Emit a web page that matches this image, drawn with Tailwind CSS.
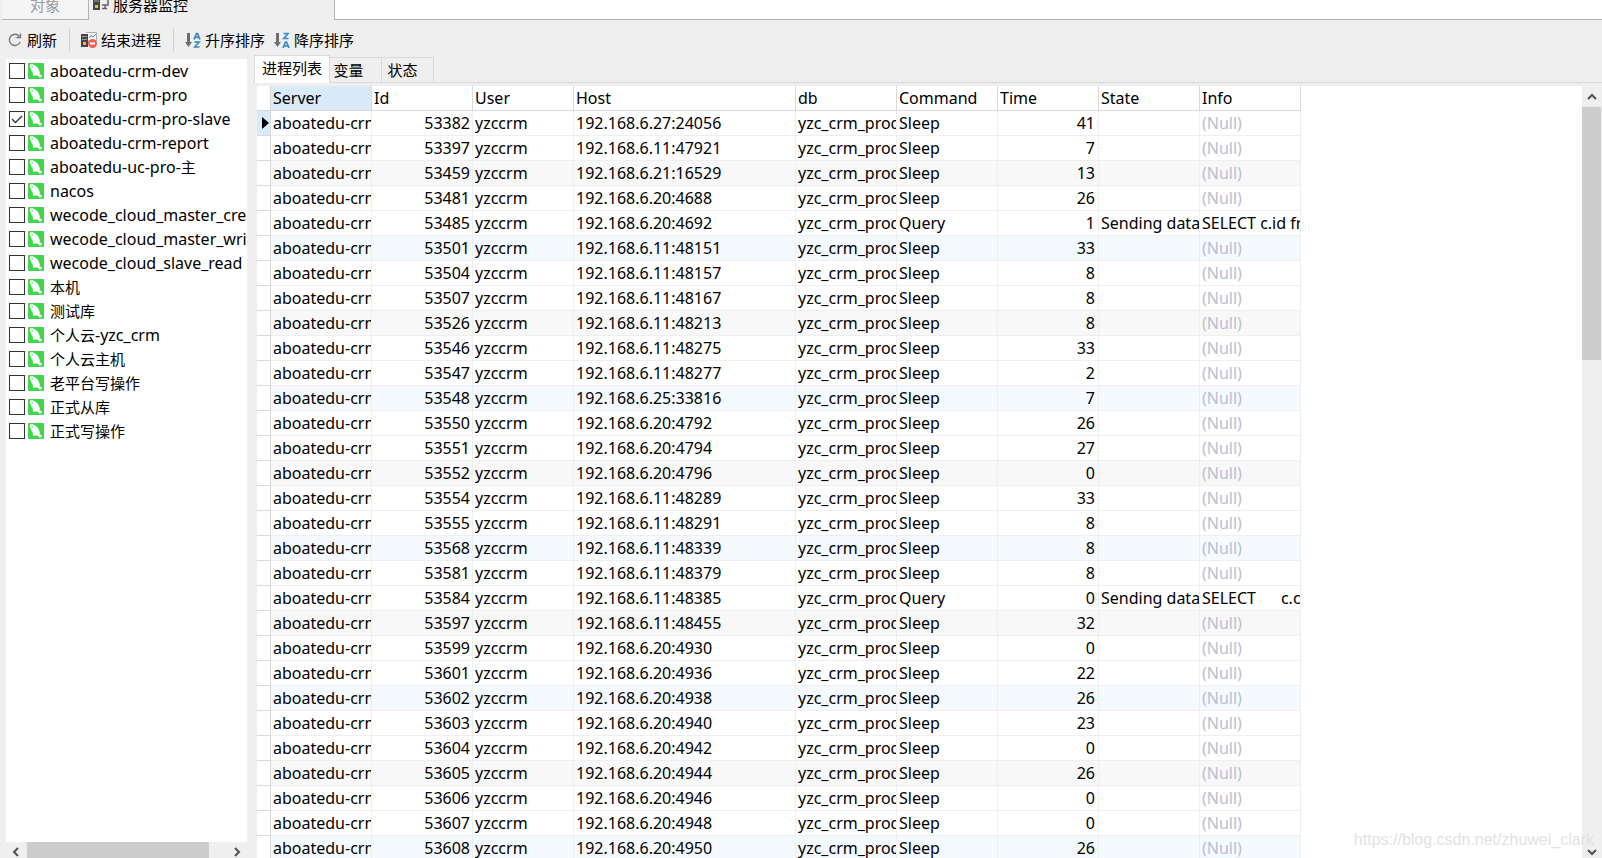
<!DOCTYPE html>
<html lang="zh-CN">
<head>
    <meta charset="utf-8">
    <meta name="viewport" content="width=device-width, initial-scale=1">
    <title>服务器监控</title>
    <script src="https://cdn.jsdelivr.net/npm/@tailwindcss/browser@4"></script>
</head>
<body class="flex h-screen flex-col overflow-hidden bg-[#efefef] font-['Noto_Sans','Noto_Sans_CJK_SC',sans-serif] text-[15px] leading-6 text-black">

<svg class="hidden">
    <symbol id="dolphin" viewBox="0 0 16 16">
        <rect width="16" height="16" rx="1" fill="#40d64b"/>
        <path fill="#fff" d="M1.500 2.500C2 1.300 3.400 1 4.800 1.400C6 1.600 7 2.200 8 3.200C10 4.600 11.200 6.500 11.500 8.800C11.700 10.500 12.400 12 14.600 13.400L12.800 13.700L12.500 15.200C11.400 14.600 10.600 13.800 9.800 12.800C8.600 12.900 7.600 12.600 6.700 12L6 13.400C5 12.600 4.700 11.300 5 10C4 9 3.500 8 3.300 6.800C3.200 5.800 2.600 5.200 2 4.500Z"/>
        <circle cx="4.200" cy="3.800" r=".7" fill="#40d64b"/>
    </symbol>
    <symbol id="chevron" viewBox="0 0 10 10">
        <path d="M1 7L5 3L9 7" fill="none" stroke="#505050" stroke-width="2"/>
    </symbol>
    <symbol id="down-arrow" viewBox="0 0 7 16">
        <path d="M2 1H5V10H7L3.500 15L0 10H2Z" fill="#6e6e6e"/>
    </symbol>
</svg>

<header class="flex h-5 shrink-0 items-end">
    <button class="ml-[2px] flex h-5 w-[87px] items-end justify-center border-r border-b border-[#b4b4b4] bg-[#f5f5f5] pb-[2px] text-[#9a9a9a]">对象</button>
    <button class="flex h-5 w-[245px] items-end pb-[3px] pl-1">
        <svg class="mr-1 mb-[6px] h-4 w-4 shrink-0" viewBox="0 0 16 16">
            <rect x="0" y="0" width="7" height="15" fill="#454545"/>
            <path d="M1 3H6M1 6H6" stroke="#999"/>
            <rect x="2" y="10" width="3" height="3" fill="#f5b92e"/>
            <path d="M8 3H15V10H9M12 10V13M9 13.500H14" fill="none" stroke="#666" stroke-width="1.500"/>
        </svg>
        服务器监控
    </button>
    <div class="h-5 flex-1 border-b border-l border-[#b4b4b4] bg-white"></div>
</header>

<nav class="flex h-[35px] shrink-0 items-center pt-1 pl-2">
    <button class="flex items-center gap-[5px] pr-3">
        <svg class="h-[14px] w-[14px]" viewBox="0 0 14 14" fill="none" stroke="#777" stroke-width="1.300">
            <path d="M12.200 9A5.600 5.600 0 1 1 11.500 3.500"/>
            <path d="M12.500 .5V4.500H8.500"/>
        </svg>
        刷新
    </button>
    <button class="flex items-center gap-1 border-l border-[#d0d0d0] pr-3 pl-[11px]">
        <svg class="h-4 w-4" viewBox="0 0 16 16">
            <path d="M5 .5H15.500V9H7" fill="#fff" stroke="#aaa"/>
            <path d="M8 6L10 3.500L12 5L15 2" fill="none" stroke="#3b8ac4"/>
            <rect x="0" y="2" width="7" height="13" fill="#454545"/>
            <path d="M1 4.500H6M1 7.500H6" stroke="#999"/>
            <rect x="2" y="10" width="3" height="3" fill="#f5b92e"/>
            <circle cx="11.500" cy="11.500" r="4.500" fill="#fb5a50"/>
            <path d="M9 11.500H14" stroke="#fff" stroke-width="2"/>
        </svg>
        结束进程
    </button>
    <button class="flex items-center gap-1 border-l border-[#d0d0d0] pr-[9px] pl-[11px]">
        <svg class="h-4 w-4" viewBox="0 0 16 16">
            <use href="#down-arrow" width="7" height="16"/>
            <path d="M9 7.500L11.500 1.500H12.500L15 7.500M10.300 5.300H13.700M9.500 10.200H14L9.800 15H14.500" fill="none" stroke="#3b8ac4" stroke-width="1.700"/>
        </svg>
        升序排序
    </button>
    <button class="flex items-center gap-1">
        <svg class="h-4 w-4" viewBox="0 0 16 16">
            <use href="#down-arrow" width="7" height="16"/>
            <path d="M9.500 1.500H14L9.800 6.500H14.500M9 16L11.500 10H12.500L15 16M10.300 13.800H13.700" fill="none" stroke="#3b8ac4" stroke-width="1.700"/>
        </svg>
        降序排序
    </button>
</nav>

<main class="flex min-h-0 flex-1">
    <aside class="mt-1 ml-[6px] flex w-[241px] shrink-0 flex-col">
        <ul id="servers" class="flex-1 overflow-hidden bg-white text-base leading-6"></ul>
        <div class="flex h-4 items-center justify-between px-[5px]">
            <button class="pt-[3px]" aria-label="向左"><svg class="h-[10px] w-[10px] -rotate-90"><use href="#chevron"/></svg></button>
            <div class="mr-[18px] h-4 w-[182px] bg-[#cdcdcd]"></div>
            <button class="pt-[3px]" aria-label="向右"><svg class="h-[10px] w-[10px] rotate-90"><use href="#chevron"/></svg></button>
        </div>
    </aside>

    <section class="ml-[7px] flex min-w-0 flex-1 flex-col">
        <div class="flex h-7 shrink-0 items-end">
            <button class="h-7 w-[76px] border-x border-t border-[#d9d9d9] bg-white pb-[3px]">进程列表</button>
            <button class="h-[26px] w-[52px] border-t border-r border-b border-[#d9d9d9] pr-[14px]">变量</button>
            <button class="h-[26px] w-[52px] border-t border-r border-b border-[#d9d9d9] pr-[10px]">状态</button>
            <div class="h-px flex-1 bg-[#d9d9d9]"></div>
        </div>
        <div class="mt-[3px] ml-[3px] flex min-h-0 flex-1">
            <div class="flex-1 overflow-hidden bg-white">
                <table class="w-[1044px] table-fixed border-separate border-spacing-0 text-base leading-6">
                    <colgroup>
                        <col class="w-[14px]"><col class="w-[101px]"><col class="w-[101px]"><col class="w-[101px]"><col class="w-[222px]">
                        <col class="w-[101px]"><col class="w-[101px]"><col class="w-[101px]"><col class="w-[101px]"><col class="w-[101px]">
                    </colgroup>
                    <thead>
                        <tr id="columns" class="h-[25px] text-left"></tr>
                    </thead>
                    <tbody id="processes"></tbody>
                </table>
            </div>
            <div class="flex w-5 flex-col items-center pb-[1px]">
                <button class="flex h-[21px] items-center" aria-label="向上"><svg class="h-[10px] w-[10px]"><use href="#chevron"/></svg></button>
                <div class="mr-px h-[253px] w-[19px] bg-[#cdcdcd]"></div>
                <button class="mt-auto" aria-label="向下"><svg class="h-[10px] w-[10px] rotate-180"><use href="#chevron"/></svg></button>
            </div>
        </div>
    </section>
</main>

<p class="absolute right-2 bottom-[6px] font-['Liberation_Sans',sans-serif] text-base text-[#e2e2e2]">https://blog.csdn.net/zhuwei_clark</p>

<script>
const servers = [
    "aboatedu-crm-dev", "aboatedu-crm-pro", "aboatedu-crm-pro-slave", "aboatedu-crm-report",
    "aboatedu-uc-pro-主", "nacos", "wecode_cloud_master_crea", "wecode_cloud_master_writ",
    "wecode_cloud_slave_read", "本机", "测试库", "个人云-yzc_crm", "个人云主机",
    "老平台写操作", "正式从库", "正式写操作",
]
const columns = ["Server", "Id", "User", "Host", "db", "Command", "Time", "State", "Info"]

// id, host, time, info (only for running queries)
const processes = [
    [53382, "192.168.6.27:24056", 41],
    [53397, "192.168.6.11:47921", 7],
    [53459, "192.168.6.21:16529", 13],
    [53481, "192.168.6.20:4688", 26],
    [53485, "192.168.6.20:4692", 1, "SELECT c.id fro"],
    [53501, "192.168.6.11:48151", 33],
    [53504, "192.168.6.11:48157", 8],
    [53507, "192.168.6.11:48167", 8],
    [53526, "192.168.6.11:48213", 8],
    [53546, "192.168.6.11:48275", 33],
    [53547, "192.168.6.11:48277", 2],
    [53548, "192.168.6.25:33816", 7],
    [53550, "192.168.6.20:4792", 26],
    [53551, "192.168.6.20:4794", 27],
    [53552, "192.168.6.20:4796", 0],
    [53554, "192.168.6.11:48289", 33],
    [53555, "192.168.6.11:48291", 8],
    [53568, "192.168.6.11:48339", 8],
    [53581, "192.168.6.11:48379", 8],
    [53584, "192.168.6.11:48385", 0, "SELECT      c.cl"],
    [53597, "192.168.6.11:48455", 32],
    [53599, "192.168.6.20:4930", 0],
    [53601, "192.168.6.20:4936", 22],
    [53602, "192.168.6.20:4938", 26],
    [53603, "192.168.6.20:4940", 23],
    [53604, "192.168.6.20:4942", 0],
    [53605, "192.168.6.20:4944", 26],
    [53606, "192.168.6.20:4946", 0],
    [53607, "192.168.6.20:4948", 0],
    [53608, "192.168.6.20:4950", 26],
]

// Chinese runs are set one pixel smaller than the Latin text
const mixed = text => text.replace(/[\u4e00-\u9fff]+/g, run => `<span class="text-[15px]">${run}</span>`)

document.getElementById("servers").innerHTML = servers.map((name, i) => `
    <li class="flex h-6 items-center overflow-hidden pl-[3px] whitespace-nowrap">
        <input type="checkbox" id="server-${i}" class="peer h-4 w-4 shrink-0 appearance-none border border-[#333] bg-white" ${i === 2 ? "checked" : ""}>
        <svg class="pointer-events-none invisible -ml-4 h-4 w-4 shrink-0 peer-checked:visible" viewBox="0 0 16 16"><path d="M3 8L6.500 11.500L13 5" fill="none" stroke="#333" stroke-width="1.400"/></svg>
        <label for="server-${i}" class="flex items-center">
            <svg class="mr-[6px] ml-[3px] h-4 w-4 shrink-0"><use href="#dolphin"/></svg><span>${mixed(name)}</span>
        </label>
    </li>`).join("")

document.getElementById("columns").innerHTML = `<td class="border-r border-b border-[#d9d9d9]"></td>` +
    columns.map((name, i) => `<th class="border-r border-b border-[#d9d9d9] px-[2px] py-0 font-normal ${i === 0 ? "bg-[#d9eaf8]" : ""}">${name}</th>`).join("")

const cell = (content, extra = "") =>
    `<td class="overflow-hidden border-r border-b border-[#efefef] py-0 pl-[2px] whitespace-pre ${extra}">${content}</td>`

document.getElementById("processes").innerHTML = processes.map(([id, host, time, info], i) => `
    <tr class="h-[25px] ${i % 6 === 2 ? "bg-[#f8f8f8]" : i % 6 === 5 ? "bg-[#f4faff]" : "bg-white"}">
        <td class="border-r border-b border-[#d9d9d9] p-0 ${i === 0 ? "bg-[#d9eaf8]" : "bg-white"}">
            ${i === 0 ? `<svg class="ml-[5px] h-3 w-[7px]" viewBox="0 0 7 12"><path d="M0 0L7 6L0 12Z"/></svg>` : ""}
        </td>
        ${cell("aboatedu-crm")}
        ${cell(id, "pr-[2px] text-right")}
        ${cell("yzccrm")}
        ${cell(host)}
        ${cell("yzc_crm_prod")}
        ${cell(info ? "Query" : "Sleep")}
        ${cell(time, "pr-[3px] text-right")}
        ${cell(info ? "Sending data" : "")}
        ${cell(info || "(Null)", info ? "" : "text-[#b8bed4]")}
    </tr>`).join("")
</script>
</body>
</html>
